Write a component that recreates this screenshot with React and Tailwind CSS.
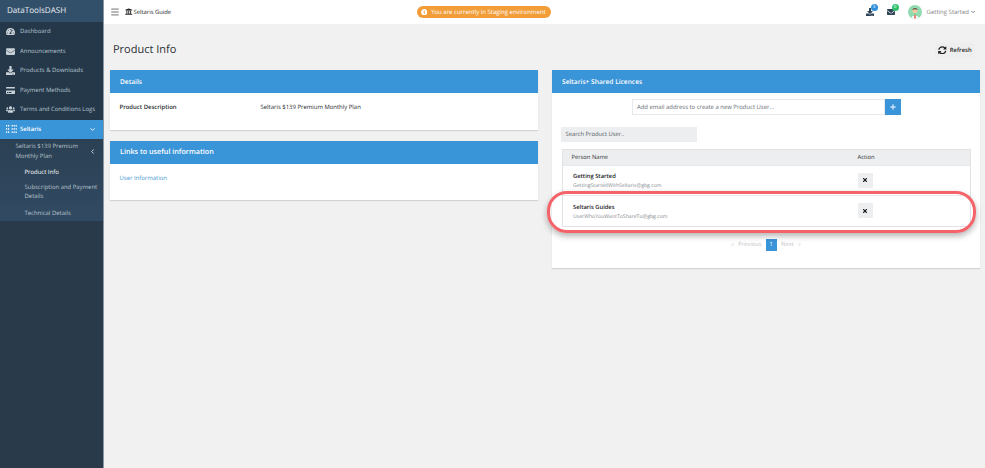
import React from "react";
import { ChevronDown, ChevronLeft, Menu, Plus, ChevronsLeft, ChevronsRight } from "lucide-react";
import { FaTachometerAlt, FaEnvelope, FaDownload, FaCreditCard, FaUsers, FaUniversity, FaSyncAlt, FaTimes, FaExclamationCircle } from "react-icons/fa";

const font = { fontFamily: '"Open Sans", "Noto Sans", sans-serif' };

function GridIcon() {
  const xs = [0, 2, 5.6, 7.6, 9.6];
  const ys = [0, 3.2, 6.4];
  return (
    <svg width="11" height="8" viewBox="0 0 11 8" className="shrink-0" fill="#fff">
      {xs.map((x) => ys.map((y) => <rect key={`${x}-${y}`} x={x} y={y} width="1.2" height="1.5" />))}
    </svg>
  );
}

function NavItem({ icon: Icon, label }) {
  return (
    <div className="flex h-[19.5px] items-center pl-[6px] text-[#b8c3cd]">
      <span className="flex w-[9px] shrink-0 justify-center text-[#c9d1d8]">
        <Icon size={9} />
      </span>
      <span className="ml-[5px] whitespace-nowrap text-[5.95px]">{label}</span>
    </div>
  );
}

function Card({ title, children, className = "", titleClass = "text-[6.6px]" }) {
  return (
    <section className={`bg-white shadow-[0_1px_1px_rgba(0,0,0,0.12)] ${className}`}>
      <div className={`flex h-[22.5px] items-center bg-[#3a94d8] pl-[10px] pt-[1px] font-semibold text-white ${titleClass}`}>{title}</div>
      {children}
    </section>
  );
}

function UserRow({ name, email }) {
  return (
    <div className="flex h-[30.5px] items-center border-t border-[#e6e8ea]">
      <div className="w-[295px] pl-[10.5px] pt-[1px]">
        <div className="text-[5.8px] font-semibold leading-[9px] text-[#1d2125]">{name}</div>
        <div className="text-[5.15px] leading-[8px] text-[#858b91]">{email}</div>
      </div>
      <div className="flex h-[15px] w-[15.5px] items-center justify-center rounded-[1px] bg-[#eceef0] text-[#111]">
        <FaTimes size={6} />
      </div>
    </div>
  );
}

export default function App() {
  return (
    <div style={font} className="relative flex h-[468px] w-[985px] overflow-hidden bg-[#f1f1f2] [text-rendering:geometricPrecision]">
      <aside className="flex h-full w-[104px] shrink-0 flex-col border-r border-[#8a96a2] bg-[#293b4a]">
        <div className="flex h-[22px] items-center bg-[#33506a] pl-[7px] text-[8.1px] text-[#e6edf3]">DataToolsDASH</div>
        <nav className="flex flex-col bg-[#24384a]">
          <NavItem icon={FaTachometerAlt} label="Dashboard" />
          <NavItem icon={FaEnvelope} label="Announcements" />
          <NavItem icon={FaDownload} label="Products & Downloads" />
          <NavItem icon={FaCreditCard} label="Payment Methods" />
          <NavItem icon={FaUsers} label="Terms and Conditions Logs" />
          <div className="flex h-[19.5px] items-center bg-[#3a94d8] pl-[6px] pr-[7px] text-white">
            <GridIcon />
            <span className="ml-[3px] flex-1 text-[5.95px] font-semibold">Seltaris</span>
            <ChevronDown size={7} strokeWidth={3} />
          </div>
        </nav>
        <div className="bg-gradient-to-b from-[#2b4053] to-[#314a63] pb-[3px] pt-[3px] text-[#b8c3cd]">
          <div className="flex items-center pl-[15.5px] pr-[7px]">
            <span className="w-[68px] text-[5.95px] leading-[9.6px]">Seltaris $139 Premium Monthly Plan</span>
            <span className="flex-1" />
            <ChevronLeft size={7} strokeWidth={3} className="text-[#dfe5ea]" />
          </div>
          <div className="flex flex-col pl-[24.5px] pr-[2px] text-[5.95px]">
            <div className="pt-[5.5px] font-medium leading-[10px] text-white">Product Info</div>
            <div className="pt-[6px] leading-[9.6px]">Subscription and Payment Details</div>
            <div className="pt-[6px] leading-[10px]">Technical Details</div>
          </div>
        </div>
      </aside>

      <div className="flex min-w-0 flex-1 flex-col">
        <header className="flex h-[24px] shrink-0 items-center bg-white pl-[6px] pr-[9px]">
          <Menu size={10} strokeWidth={2} className="text-[#555]" />
          <span className="ml-[5px] text-[#222]">
            <FaUniversity size={7.5} />
          </span>
          <span className="ml-[1px] text-[5.85px] font-medium text-[#222]">Seltaris Guide</span>
          <div className="ml-[246px] flex h-[12px] w-[134px] items-center rounded-full bg-[#f29d38] pl-[3.5px] text-[6px] text-white">
            <span className="mr-[4px]">
              <FaExclamationCircle size={6.5} />
            </span>
            <span className="whitespace-nowrap">You are currently in Staging environment</span>
          </div>
          <span className="flex-1" />
          <div className="relative mr-[13px] text-[#2f4458]">
            <FaDownload size={8} />
            <span className="absolute -right-[4px] -top-[4px] flex h-[7px] w-[7px] items-center justify-center rounded-full bg-[#2f8fdb] text-[4.5px] text-white">3</span>
          </div>
          <div className="relative mr-[13px] text-[#2f4458]">
            <FaEnvelope size={8} />
            <span className="absolute -right-[4px] -top-[4px] flex h-[7px] w-[7px] items-center justify-center rounded-full bg-[#2fc26b] text-[4.5px] text-white">0</span>
          </div>
          <svg width="14" height="14" viewBox="0 0 14 14" className="mr-[5px] shrink-0">
            <circle cx="7" cy="7" r="7" fill="#8edcb0" />
            <circle cx="7" cy="5.4" r="2.6" fill="#f3c9a0" />
            <path d="M4.3 4.8C4.4 2.6 9.6 2.6 9.7 4.8C8.6 3.9 5.4 3.9 4.3 4.8Z" fill="#2d2d2d" />
            <path d="M3.5 13C3.7 9.5 10.3 9.5 10.5 13L8 14H6Z" fill="#fff" />
            <path d="M6.5 9.5H7.5L7.8 13.4H6.2Z" fill="#e4473f" />
          </svg>
          <span className="text-[6px] text-[#858585]">Getting Started</span>
          <ChevronDown size={6} strokeWidth={3} className="ml-[1px] text-[#666]" />
        </header>

        <main className="flex min-h-0 flex-1 flex-col pl-[6px] pr-[5px]">
          <div className="flex h-[46px] shrink-0 items-center justify-between pt-[6px]">
            <h1 className="pl-[3px] pt-[1px] text-[11px] font-normal text-[#2c3033]">Product Info</h1>
            <div className="mr-[5px] flex h-[15px] w-[40px] items-center justify-center gap-[3px] rounded-[2px] bg-[#eeeeef] text-[5.9px] font-semibold text-[#222]">
              <FaSyncAlt size={8.5} />
              Refresh
            </div>
          </div>

          <div className="flex items-start gap-[14px]">
            <div className="flex w-[428px] flex-col gap-[11px]">
              <Card title="Details">
                <div className="flex h-[37.5px] pl-[9.5px] pt-[10.5px] text-[5.95px] leading-[9px] text-[#24282c]">
                  <span className="w-[141px] font-semibold">Product Description</span>
                  <span>Seltaris $139 Premium Monthly Plan</span>
                </div>
              </Card>
              <Card title="Links to useful information" titleClass="text-[7.2px]">
                <div className="h-[36.5px] pl-[9.5px] pt-[10px] text-[5.95px] leading-[9px] text-[#4a9bd4]">User Information</div>
              </Card>
            </div>

            <Card title="Seltaris+ Shared Licences" className="h-[198px] w-[428px]">
              <div className="flex justify-center pt-[6.5px]">
                <div className="flex h-[15.5px] w-[269px]">
                  <div className="flex flex-1 items-center border border-[#e8e9eb] pl-[4.5px] pt-[1px] text-[5.92px] text-[#666c72]">Add email address to create a new Product User...</div>
                  <div className="flex w-[16px] items-center justify-center bg-[#3a94d8] text-white">
                    <Plus size={8} strokeWidth={3} />
                  </div>
                </div>
              </div>
              <div className="ml-[9px] mt-[12px] flex h-[15px] w-[136px] items-center bg-[#eceef0] pl-[4.5px] pt-[1px] text-[5.85px] text-[#555b61]">Search Product User..</div>
              <div className="mx-[9.5px] mt-[7px] border border-[#e1e3e5]">
                <div className="flex h-[15px] items-center bg-[#eceef0] pl-[9px] text-[5.8px] font-medium text-[#333]">
                  <span className="w-[286px]">Person Name</span>
                  <span>Action</span>
                </div>
                <UserRow name="Getting Started" email="GettingStartedWithSeltaris@gbg.com" />
                <UserRow name="Seltaris Guides" email="UserWhoYouWantToShareTo@gbg.com" />
              </div>
              <div className="mt-[12px] flex items-center justify-center text-[5.8px] text-[#bfc3c7]">
                <ChevronsLeft size={5} className="mr-[3px]" />
                <span className="mr-[4px]">Previous</span>
                <span className="flex h-[12px] w-[11.5px] items-center justify-center bg-[#3a94d8] text-white">1</span>
                <span className="ml-[4px]">Next</span>
                <ChevronsRight size={5} className="ml-[3px]" />
              </div>
            </Card>
          </div>
        </main>
      </div>

      <div className="pointer-events-none absolute left-[547px] top-[191px] h-[42px] w-[429px] rounded-[20px] border-[3.5px] border-[#f4626a] shadow-[0_3px_6px_rgba(0,0,0,0.3)]" />
    </div>
  );
}
